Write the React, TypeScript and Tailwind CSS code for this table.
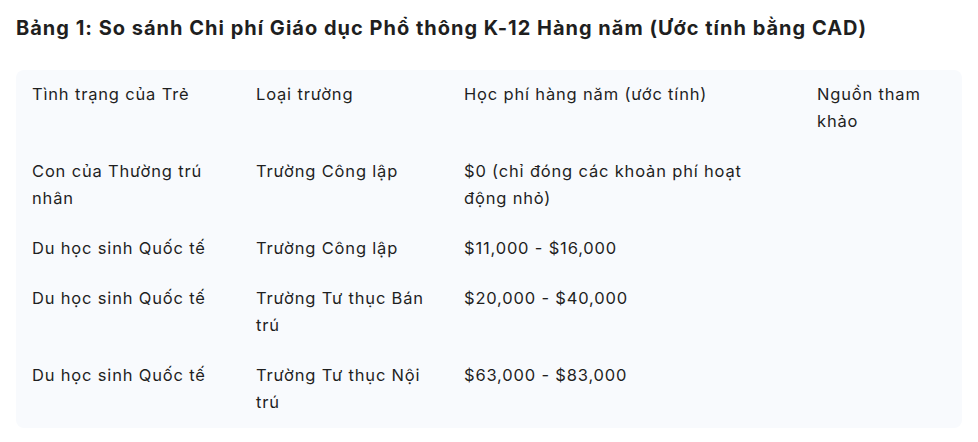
const headers = ['Tình trạng của Trẻ', 'Loại trường', 'Học phí hàng năm (ước tính)', 'Nguồn tham khảo']

const rows = [
  ['Con của Thường trú nhân', 'Trường Công lập', '$0 (chỉ đóng các khoản phí hoạt động nhỏ)', ''],
  ['Du học sinh Quốc tế', 'Trường Công lập', '$11,000 - $16,000', ''],
  ['Du học sinh Quốc tế', 'Trường Tư thục Bán trú', '$20,000 - $40,000', ''],
  ['Du học sinh Quốc tế', 'Trường Tư thục Nội trú', '$63,000 - $83,000', ''],
]

// max text width per column so lines break where the reference does
const widths = ['max-w-[200px]', 'max-w-[185px]', 'max-w-[300px]', 'max-w-[125px]']

function Row({ cells }: { cells: string[] }) {
  return (
    <>
      {cells.map((c, i) => (
        <div key={i} className="pl-4 pt-[11px] pb-[12px] leading-[27px]">
          <div className={widths[i]}>{c}</div>
        </div>
      ))}
    </>
  )
}

export default function App() {
  return (
    <div className="w-[978px] h-[442px] bg-white px-4 pt-[14px] text-[#1f1f1f] font-['Inter','Noto_Sans',sans-serif]">
      <h2 className="text-[20px] font-bold leading-[28px] tracking-[0.05em] whitespace-nowrap">
        Bảng 1: So sánh Chi phí Giáo dục Phổ thông K-12 Hàng năm (Ước tính bằng CAD)
      </h2>
      <div className="mt-[28px] rounded-lg bg-[#f8fafd] text-[16.5px] tracking-[0.05em] grid grid-cols-[224px_208px_353px_1fr]">
        <Row cells={headers} />
        {rows.map((r, i) => (
          <Row key={i} cells={r} />
        ))}
      </div>
    </div>
  )
}
